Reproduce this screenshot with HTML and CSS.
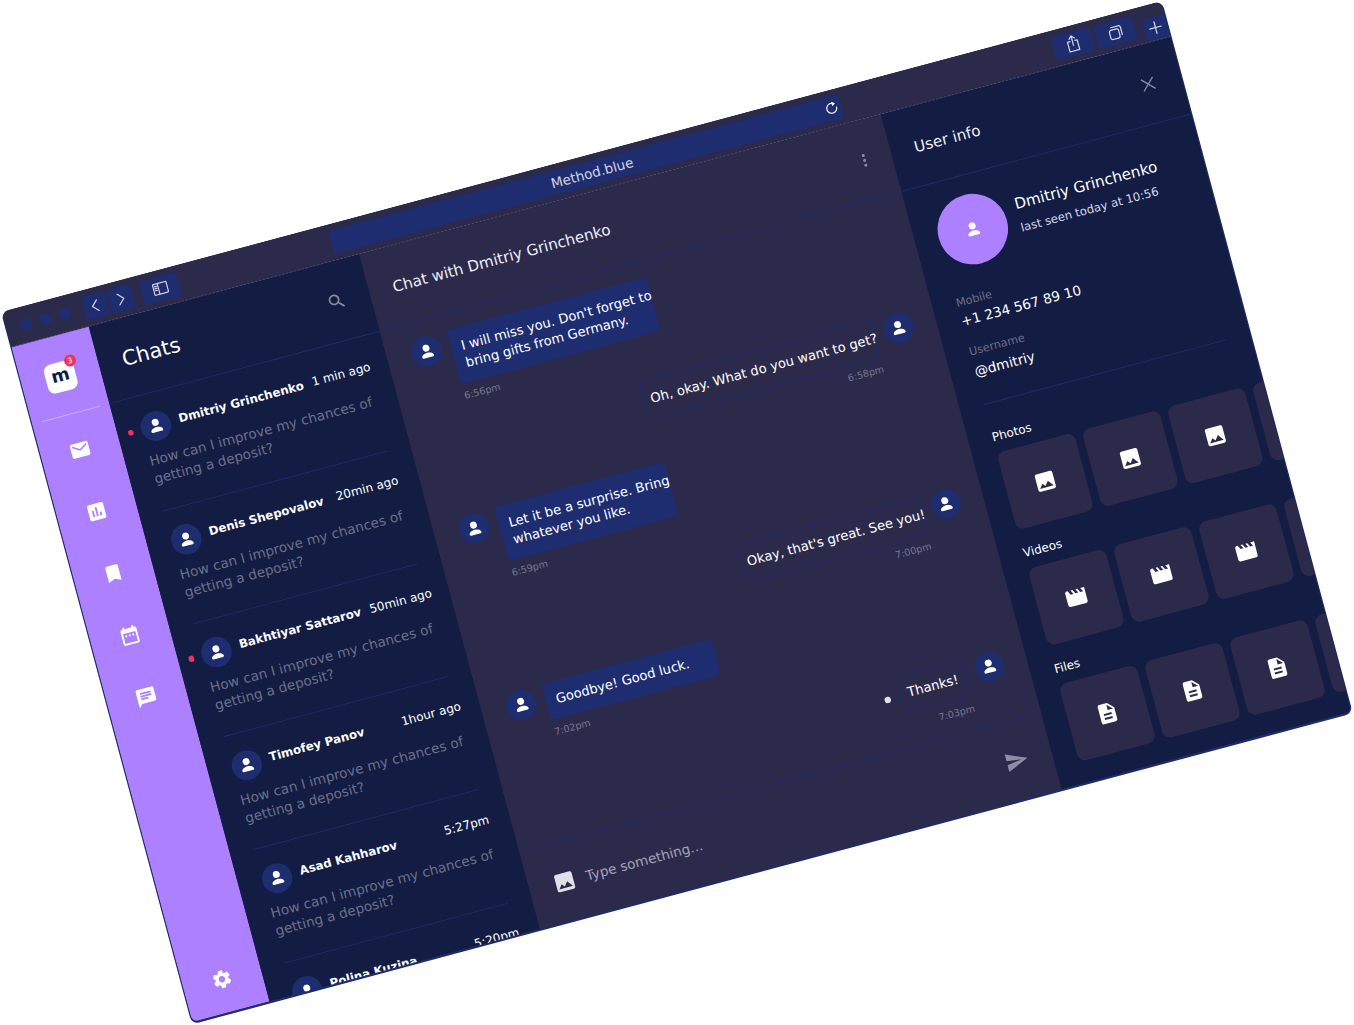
FILE: index.html
```html
<!DOCTYPE html>
<html lang="en">
<head>
<meta charset="utf-8">
<title>Method.blue</title>
<link rel="stylesheet" href="styles.css">
</head>
<body>
<svg class="defs" xmlns="http://www.w3.org/2000/svg">
  <symbol id="person" viewBox="0 0 16 16"><circle cx="8" cy="4.900" r="3.100"/><path d="M2.600 12.300c0-2.100 3.500-3.200 5.400-3.200s5.400 1.100 5.400 3.200c0 .7-.5 1.200-1.200 1.200H3.800c-.7 0-1.200-.5-1.200-1.200z"/></symbol>
  <symbol id="photo" viewBox="0 0 24 24"><path d="M21 19V5c0-1.1-.9-2-2-2H5c-1.1 0-2 .9-2 2v14c0 1.1.9 2 2 2h14c1.1 0 2-.9 2-2zM8.500 13.500l2.500 3.010L14.500 12l4.500 6H5l3.500-4.500z"/></symbol>
  <symbol id="movie" viewBox="0 0 24 24"><path d="M18 4l2 4h-3l-2-4h-2l2 4h-3l-2-4H8l2 4H7L5 4H4c-1.100 0-1.990.9-1.990 2L2 18c0 1.100.9 2 2 2h16c1.100 0 2-.9 2-2V4h-4z"/></symbol>
  <symbol id="file" viewBox="0 0 24 24"><path d="M14 2H6c-1.100 0-1.990.9-1.990 2L4 20c0 1.100.89 2 1.990 2H18c1.100 0 2-.9 2-2V8l-6-6zm2 16H8v-2h8v2zm0-4H8v-2h8v2zm-3-5V3.500L18.500 9H13z"/></symbol>
</svg>
<main class="window">
  <header class="titlebar">
    <span class="dots"><i class="dot"></i><i class="dot"></i><i class="dot"></i></span>
    <span class="nav">
      <button class="tb-btn nav-btn"><svg class="line-icon" width="17.500" height="17.500" viewBox="0 0 14 14"><path d="M9.500 1.500L4 7l5.500 5.500"/></svg></button>
      <button class="tb-btn nav-btn"><svg class="line-icon" width="17.500" height="17.500" viewBox="0 0 14 14"><path d="M4.500 1.500L10 7l-5.500 5.500"/></svg></button>
    </span>
    <button class="tb-btn toggle-btn"><svg class="line-icon" width="20" height="17.500" viewBox="0 0 16 14"><rect x="1" y="1.500" width="14" height="11" rx="1"/><path d="M6 1.500v11M2.500 4h2M2.500 6h2M2.500 8h2"/></svg></button>
    <div class="url">
      <span class="url-text">Method.blue</span>
      <svg class="line-icon reload" width="17.500" height="17.500" viewBox="0 0 14 14"><path d="M9.800 2.600A5 5 0 1 0 12 7"/><path class="solid" d="M8 .4l3.400 2.300L8 5z"/></svg>
    </div>
    <span class="actions">
      <button class="tb-btn act-btn"><svg class="line-icon" width="20" height="22.500" viewBox="0 0 16 18"><path d="M5.500 6.500H3v10h10v-10h-2.500M8 11V1.500M5.200 4L8 1.200 10.800 4"/></svg></button>
      <button class="tb-btn act-btn"><svg class="line-icon" width="20" height="20" viewBox="0 0 16 16"><rect x="2" y="4.500" width="9.500" height="9.500" rx="2"/><path d="M4.500 2h7.500a2 2 0 0 1 2 2v7.500"/></svg></button>
      <button class="tb-btn plus-btn"><svg class="line-icon" width="17.500" height="17.500" viewBox="0 0 14 14"><path d="M7 1v12M1 7h12"/></svg></button>
    </span>
  </header>
  <div class="body">
    <nav class="rail">
      <div class="logo">m<span class="logo-badge">3</span></div>
      <div class="rail-line"></div>
      <div class="rail-icons">
        <svg class="rail-icon" viewBox="0 0 24 24"><path d="M20 4H4c-1.100 0-2 .9-2 2v12c0 1.100.9 2 2 2h16c1.100 0 2-.9 2-2V6c0-1.100-.9-2-2-2zm0 4l-8 5-8-5V6l8 5 8-5v2z"/></svg>
        <svg class="rail-icon" viewBox="0 0 24 24"><path d="M19 3H5c-1.100 0-2 .9-2 2v14c0 1.100.9 2 2 2h14c1.100 0 2-.9 2-2V5c0-1.100-.9-2-2-2zM9 17H7v-7h2v7zm4 0h-2V7h2v10zm4 0h-2v-4h2v4z"/></svg>
        <svg class="rail-icon" viewBox="0 0 24 24"><path d="M17 3H7c-1.100 0-1.990.9-1.990 2L5 21l7-3 7 3V5c0-1.100-.9-2-2-2z"/></svg>
        <svg class="rail-icon" viewBox="0 0 24 24"><path d="M9 11H7v2h2v-2zm4 0h-2v2h2v-2zm4 0h-2v2h2v-2zm2-7h-1V2h-2v2H8V2H6v2H5c-1.110 0-1.990.9-1.990 2L3 20c0 1.100.89 2 2 2h14c1.100 0 2-.9 2-2V6c0-1.100-.9-2-2-2zm0 16H5V9h14v11z"/></svg>
        <svg class="rail-icon" viewBox="0 0 24 24"><path d="M20 2H4c-1.100 0-1.990.9-1.990 2L2 22l4-4h14c1.100 0 2-.9 2-2V4c0-1.100-.9-2-2-2zM6 9h12v2H6V9zm8 5H6v-2h8v2zm4-6H6V6h12v2z"/></svg>
      </div>
      <svg class="rail-icon gear" viewBox="0 0 24 24"><path d="M19.140 12.940c.04-.3.06-.61.06-.94 0-.32-.02-.64-.07-.94l2.030-1.580c.18-.14.23-.41.12-.61l-1.920-3.320c-.12-.22-.37-.29-.59-.22l-2.390.96c-.5-.38-1.030-.7-1.620-.94l-.36-2.540c-.04-.24-.24-.41-.48-.41h-3.840c-.24 0-.43.17-.47.41l-.36 2.540c-.59.24-1.130.57-1.620.94l-2.390-.96c-.22-.08-.47 0-.59.22L2.740 8.870c-.12.21-.08.47.12.61l2.030 1.580c-.05.3-.09.63-.09.94s.02.64.07.94l-2.030 1.580c-.18.14-.23.41-.12.61l1.920 3.320c.12.22.37.29.59.22l2.390-.96c.5.38 1.030.7 1.620.94l.36 2.540c.05.24.24.41.48.41h3.840c.24 0 .44-.17.47-.41l.36-2.540c.59-.24 1.130-.56 1.620-.94l2.390.96c.22.08.47 0 .59-.22l1.920-3.320c.12-.22.07-.47-.12-.61l-2.010-1.580zM12 15.600c-1.980 0-3.600-1.620-3.600-3.600s1.620-3.600 3.600-3.600 3.600 1.620 3.600 3.600-1.620 3.600-3.600 3.600z"/></svg>
    </nav>

    <section class="chats">
      <div class="panel-head">
        <h1 class="chats-title">Chats</h1>
        <svg class="search" viewBox="0 0 24 24"><path d="M15.500 14h-.79l-.28-.27C15.410 12.590 16 11.110 16 9.500 16 5.910 13.090 3 9.500 3S3 5.910 3 9.500 5.910 16 9.500 16c1.610 0 3.090-.59 4.230-1.570l.27.28v.79l5 4.990L20.490 19l-4.990-5zm-6 0C7.010 14 5 11.990 5 9.500S7.010 5 9.500 5 14 7.010 14 9.500 11.990 14 9.500 14z"/></svg>
      </div>
      <ul class="chat-list">
        <li class="chat-item">
          <div class="chat-top"><span class="avatar unread"><svg class="person"><use href="#person"/></svg></span><b class="chat-name">Dmitriy Grinchenko</b><span class="chat-time">1 min ago</span></div>
          <p class="chat-preview">How can I improve my chances of getting a deposit?</p>
        </li>
        <li class="chat-item">
          <div class="chat-top"><span class="avatar"><svg class="person"><use href="#person"/></svg></span><b class="chat-name">Denis Shepovalov</b><span class="chat-time">20min ago</span></div>
          <p class="chat-preview">How can I improve my chances of getting a deposit?</p>
        </li>
        <li class="chat-item">
          <div class="chat-top"><span class="avatar unread"><svg class="person"><use href="#person"/></svg></span><b class="chat-name">Bakhtiyar Sattarov</b><span class="chat-time">50min ago</span></div>
          <p class="chat-preview">How can I improve my chances of getting a deposit?</p>
        </li>
        <li class="chat-item">
          <div class="chat-top"><span class="avatar"><svg class="person"><use href="#person"/></svg></span><b class="chat-name">Timofey Panov</b><span class="chat-time">1hour ago</span></div>
          <p class="chat-preview">How can I improve my chances of getting a deposit?</p>
        </li>
        <li class="chat-item">
          <div class="chat-top"><span class="avatar"><svg class="person"><use href="#person"/></svg></span><b class="chat-name">Asad Kahharov</b><span class="chat-time">5:27pm</span></div>
          <p class="chat-preview">How can I improve my chances of getting a deposit?</p>
        </li>
        <li class="chat-item">
          <div class="chat-top"><span class="avatar"><svg class="person"><use href="#person"/></svg></span><b class="chat-name">Polina Kuzina</b><span class="chat-time">5:20pm</span></div>
          <p class="chat-preview">How can I improve my chances of getting a deposit?</p>
        </li>
      </ul>
    </section>

    <section class="conversation">
      <div class="panel-head">
        <h2 class="head-title">Chat with Dmitriy Grinchenko</h2>
        <svg class="more" viewBox="0 0 4 16"><circle cx="2" cy="3" r="1.500"/><circle cx="2" cy="8" r="1.500"/><circle cx="2" cy="13" r="1.500"/></svg>
      </div>
      <div class="messages">
        <div class="msg">
          <span class="avatar"><svg class="person"><use href="#person"/></svg></span>
          <div class="msg-body"><div class="bubble in w206">I will miss you. Don't forget to<br>bring gifts from Germany.</div><div class="msg-time">6:56pm</div></div>
        </div>
        <div class="msg out">
          <span class="avatar"><svg class="person"><use href="#person"/></svg></span>
          <div class="msg-body"><div class="bubble sent w240">Oh, okay. What do you want to get?</div><div class="msg-time">6:58pm</div></div>
        </div>
        <div class="msg">
          <span class="avatar"><svg class="person"><use href="#person"/></svg></span>
          <div class="msg-body"><div class="bubble in w176">Let it be a surprise. Bring<br>whatever you like.</div><div class="msg-time">6:59pm</div></div>
        </div>
        <div class="msg out">
          <span class="avatar"><svg class="person"><use href="#person"/></svg></span>
          <div class="msg-body"><div class="bubble sent w189">Okay, that's great. See you!</div><div class="msg-time">7:00pm</div></div>
        </div>
        <div class="msg">
          <span class="avatar"><svg class="person"><use href="#person"/></svg></span>
          <div class="msg-body"><div class="bubble in w176">Goodbye! Good luck.</div><div class="msg-time">7:02pm</div></div>
        </div>
        <div class="msg out">
          <span class="avatar"><svg class="person"><use href="#person"/></svg></span>
          <div class="msg-body"><div class="bubble sent w68 typing">Thanks!</div><div class="msg-time">7:03pm</div></div>
        </div>
      </div>
      <div class="composer">
        <svg class="composer-photo"><use href="#photo"/></svg>
        <span class="composer-text">Type something...</span>
        <svg class="send" viewBox="0 0 24 24"><path d="M2.010 21L23 12 2.010 3 2 10l15 2-15 2z"/></svg>
      </div>
    </section>

    <aside class="info">
      <div class="panel-head">
        <h2 class="head-title">User info</h2>
        <svg class="close" viewBox="0 0 14 14"><path d="M1 1l12 12M13 1L1 13"/></svg>
      </div>
      <div class="profile">
        <span class="profile-avatar"><svg class="person"><use href="#person"/></svg></span>
        <div class="profile-text">
          <div class="profile-name">Dmitriy Grinchenko</div>
          <div class="profile-seen">last seen today at 10:56</div>
        </div>
      </div>
      <dl class="facts">
        <dt>Mobile</dt><dd>+1 234 567 89 10</dd>
        <dt>Username</dt><dd>@dmitriy</dd>
      </dl>
      <div class="media">
        <h3 class="media-label">Photos</h3>
        <div class="tiles">
          <div class="tile"><svg><use href="#photo"/></svg></div><div class="tile"><svg><use href="#photo"/></svg></div><div class="tile"><svg><use href="#photo"/></svg></div><div class="tile"><svg><use href="#photo"/></svg></div>
        </div>
        <h3 class="media-label">Videos</h3>
        <div class="tiles">
          <div class="tile"><svg><use href="#movie"/></svg></div><div class="tile"><svg><use href="#movie"/></svg></div><div class="tile"><svg><use href="#movie"/></svg></div><div class="tile"><svg><use href="#movie"/></svg></div>
        </div>
        <h3 class="media-label">Files</h3>
        <div class="tiles">
          <div class="tile"><svg><use href="#file"/></svg></div><div class="tile"><svg><use href="#file"/></svg></div><div class="tile"><svg><use href="#file"/></svg></div><div class="tile"><svg><use href="#file"/></svg></div>
        </div>
      </div>
    </aside>
  </div>
</main>
</body>
</html>
```
FILE: styles.css
```css
* { box-sizing: border-box; }
html, body { margin: 0; height: 100%; background: #fff; overflow: hidden; }
body { font-family: "DejaVu Sans", sans-serif; color: #fff; position: relative; }
.defs { display: none; }
h1, h2, h3, p, ul, dl, dd { margin: 0; padding: 0; font-weight: 400; }
ul { list-style: none; }
button { border: 0; padding: 0; margin: 0; color: inherit; font: inherit; }

.window {
  position: absolute; left: 2px; top: 312px;
  width: 1500px; height: 918.750px;
  transform: rotate(-15deg) scale(.8); transform-origin: 0 0;
  display: flex; flex-direction: column;
  background: #2c2a4a; border-radius: 8px; overflow: hidden;
  box-shadow: 0 1.250px 0 1.250px #1e2d70;
}

/* title bar */
.titlebar {
  height: 46.250px; flex: none; display: flex; align-items: flex-start;
  padding: 7.500px 0 0 17.500px; border-bottom: 1.250px dashed #55588c;
  background: #2c2a4a;
}
.dots { display: flex; gap: 10px; padding-top: 7.500px; }
.dot { width: 15px; height: 15px; border-radius: 50%; background: #1e2d70; }
.nav { display: flex; gap: 2.500px; margin-left: 17.500px; }
.tb-btn { display: flex; align-items: center; justify-content: center; background: #1e2d70; border-radius: 5px; height: 30px; color: #d5d7ea; }
.nav-btn { width: 30px; }
.toggle-btn { width: 47.500px; margin-left: 12.500px; }
.url { position: relative; width: 660px; height: 30px; margin-left: 197.500px; padding-left: 15px; background: #1e2d70; border-radius: 5px; display: flex; align-items: center; justify-content: center; }
.url-text { font-size: 17px; color: #d0d2e2; }
.reload { position: absolute; right: 3.750px; top: 6.250px; }
.actions { display: flex; gap: 5px; margin-left: 275px; flex: 1; height: 37.500px; }
.act-btn { width: 50px; }
.plus-btn { width: 30px; height: 27.500px; margin: 8.750px 0 0 5px; border-radius: 5px 0 0 5px; }
.line-icon { fill: none; stroke: currentColor; stroke-width: 1.200; stroke-linecap: round; stroke-linejoin: round; }
.line-icon .solid { fill: currentColor; stroke: none; }

.body { flex: 1; min-height: 0; display: flex; }

/* icon rail */
.rail { width: 100px; flex: none; background: #ad80ff; display: flex; flex-direction: column; align-items: center; padding: 32.500px 0 28.750px; }
.logo { position: relative; width: 37.500px; height: 37.500px; flex: none; background: #fff; border-radius: 9px; display: flex; align-items: center; justify-content: center; font-weight: 700; font-size: 22px; color: #131c42; padding-bottom: 4px; }
.logo-badge { position: absolute; left: 27.500px; top: -5.500px; width: 15px; height: 15px; border-radius: 50%; background: #f0335e; color: #fff; font-size: 9.500px; font-weight: 400; line-height: 15px; text-align: center; }
.rail-line { width: 75px; height: 1.250px; flex: none; margin-top: 28.750px; background: rgba(255,255,255,.4); }
.rail-icons { display: flex; flex-direction: column; gap: 52.500px; margin-top: 31.900px; }
.rail-icon { width: 27.500px; height: 27.500px; fill: #fff; display: block; }
.gear { margin-top: auto; }

/* shared panel head */
.panel-head { height: 100px; flex: none; display: flex; align-items: center; justify-content: space-between; padding: 0 30px; border-bottom: 1.250px solid #1e2d70; }
.head-title { font-size: 19px; color: #eeeef6; }

/* chats */
.chats { width: 350px; flex: none; background: #131c42; display: flex; flex-direction: column; min-height: 0; }
.chats-title { font-size: 26px; }
.search { width: 25px; height: 25px; fill: #8a8ca3; }
.chat-list { padding: 0 30px; }
.chat-item { height: 146.250px; padding-top: 22.500px; border-bottom: 1.250px solid #1e2d70; }
.chat-top { display: flex; align-items: center; gap: 11.250px; }
.avatar { position: relative; flex: none; width: 37.500px; height: 37.500px; border-radius: 50%; background: #1e2d70; display: flex; align-items: center; justify-content: center; }
.unread::before { content: ""; position: absolute; left: -17.500px; top: 15px; width: 7.500px; height: 7.500px; border-radius: 50%; background: #f0335e; }
.person { width: 22.500px; height: 22.500px; fill: #fff; }
.chat-name { font-size: 14.800px; font-weight: 700; margin-bottom: 5px; white-space: nowrap; }
.chat-time { margin: 0 -3.750px 5px auto; font-size: 15px; white-space: nowrap; }
.chat-item:nth-child(1) .chat-time { margin-right: -2.500px; }
.chat-item:nth-child(3) .chat-time { margin-right: 1.250px; }
.chat-item:nth-child(4) .chat-time { margin-right: -6.250px; }
.chat-preview { margin-top: 11px; width: 295px; font-size: 17px; line-height: 23px; color: #6c7089; }

/* conversation */
.conversation { width: 675px; flex: none; display: flex; flex-direction: column; min-height: 0; background: #2c2a4a; }
.more { width: 5px; height: 20px; fill: #8f8da6; margin-right: 2.500px; }
.messages { flex: 1; min-height: 0; display: grid; grid-template-rows: 123.750px 105px 123.750px 105px 105px 105px; padding: 20px 28.750px 0 31.250px; }
.msg { display: flex; gap: 12.500px; justify-self: start; align-items: flex-start; }
.msg.out { flex-direction: row-reverse; justify-self: end; }
.msg-body { display: flex; flex-direction: column; }
.msg.out .msg-body { align-items: flex-end; }
.bubble { font-size: 16.400px; line-height: 22.500px; padding: 12.500px 0 12.500px 12.500px; white-space: nowrap; border-radius: 0 7.500px 7.500px 7.500px; }
.bubble.in { background: #1e2d70; }
.bubble.sent { border: 1.250px solid #1e2d70; border-radius: 7.500px 0 7.500px 7.500px; padding-left: 8px; }
.w206 { width: 257.500px; } .w240 { width: 300px; } .w176 { width: 220px; } .w189 { width: 236.250px; } .w68 { width: 85px; }
.typing { position: relative; }
.typing::before { content: ""; position: absolute; left: -22px; top: 21.250px; width: 7.500px; height: 7.500px; border-radius: 50%; background: #dfe0e8; }
.msg-time { margin-top: 7.500px; font-size: 12px; color: #77768f; }
.composer { height: 98.750px; flex: none; border-top: 1.250px solid #1e2d70; display: flex; align-items: center; gap: 12.500px; padding: 0 30px; }
.composer-photo { width: 30px; height: 30px; fill: #dfe0e8; }
.composer-text { font-size: 17px; color: #a3a3b8; flex: 1; }
.send { width: 30px; height: 30px; fill: #8f8da6; }

/* user info */
.info { width: 375px; flex: none; background: #131c42; display: flex; flex-direction: column; min-height: 0; }
.close { width: 17.500px; height: 17.500px; fill: none; stroke: #8a8ca3; stroke-width: 1.300; margin-right: 3.750px; }
.profile { display: flex; gap: 15px; padding: 23.750px 30px 0; }
.profile-avatar { width: 87.500px; height: 87.500px; flex: none; border-radius: 50%; background: #ad80ff; display: flex; align-items: center; justify-content: center; }
.profile-text { padding-top: 15px; }
.profile-name { font-size: 19px; line-height: 25px; }
.profile-seen { margin-top: 7.500px; font-size: 14.600px; line-height: 20px; color: #d5d7ea; }
.facts { margin: 32.500px 30px 0; padding-bottom: 30px; border-bottom: 1.250px solid #1e2d70; }
.facts dt { font-size: 14px; line-height: 17.500px; color: #6c7089; }
.facts dd { margin: 3.750px 0 19px; font-size: 17px; line-height: 22.500px; }
.facts dd:last-child { margin: 6px 0 0; }
.media { padding: 33px 0 0 30px; }
.media-label { font-size: 15px; line-height: 18.750px; margin-bottom: 10.600px; }
.tiles { display: flex; gap: 10px; margin-bottom: 20.600px; }
.tile { width: 100px; height: 100px; flex: none; border-radius: 10px; background: #2c2a4a; display: flex; align-items: center; justify-content: center; }
.tile svg { width: 30px; height: 30px; fill: #fff; }
```
